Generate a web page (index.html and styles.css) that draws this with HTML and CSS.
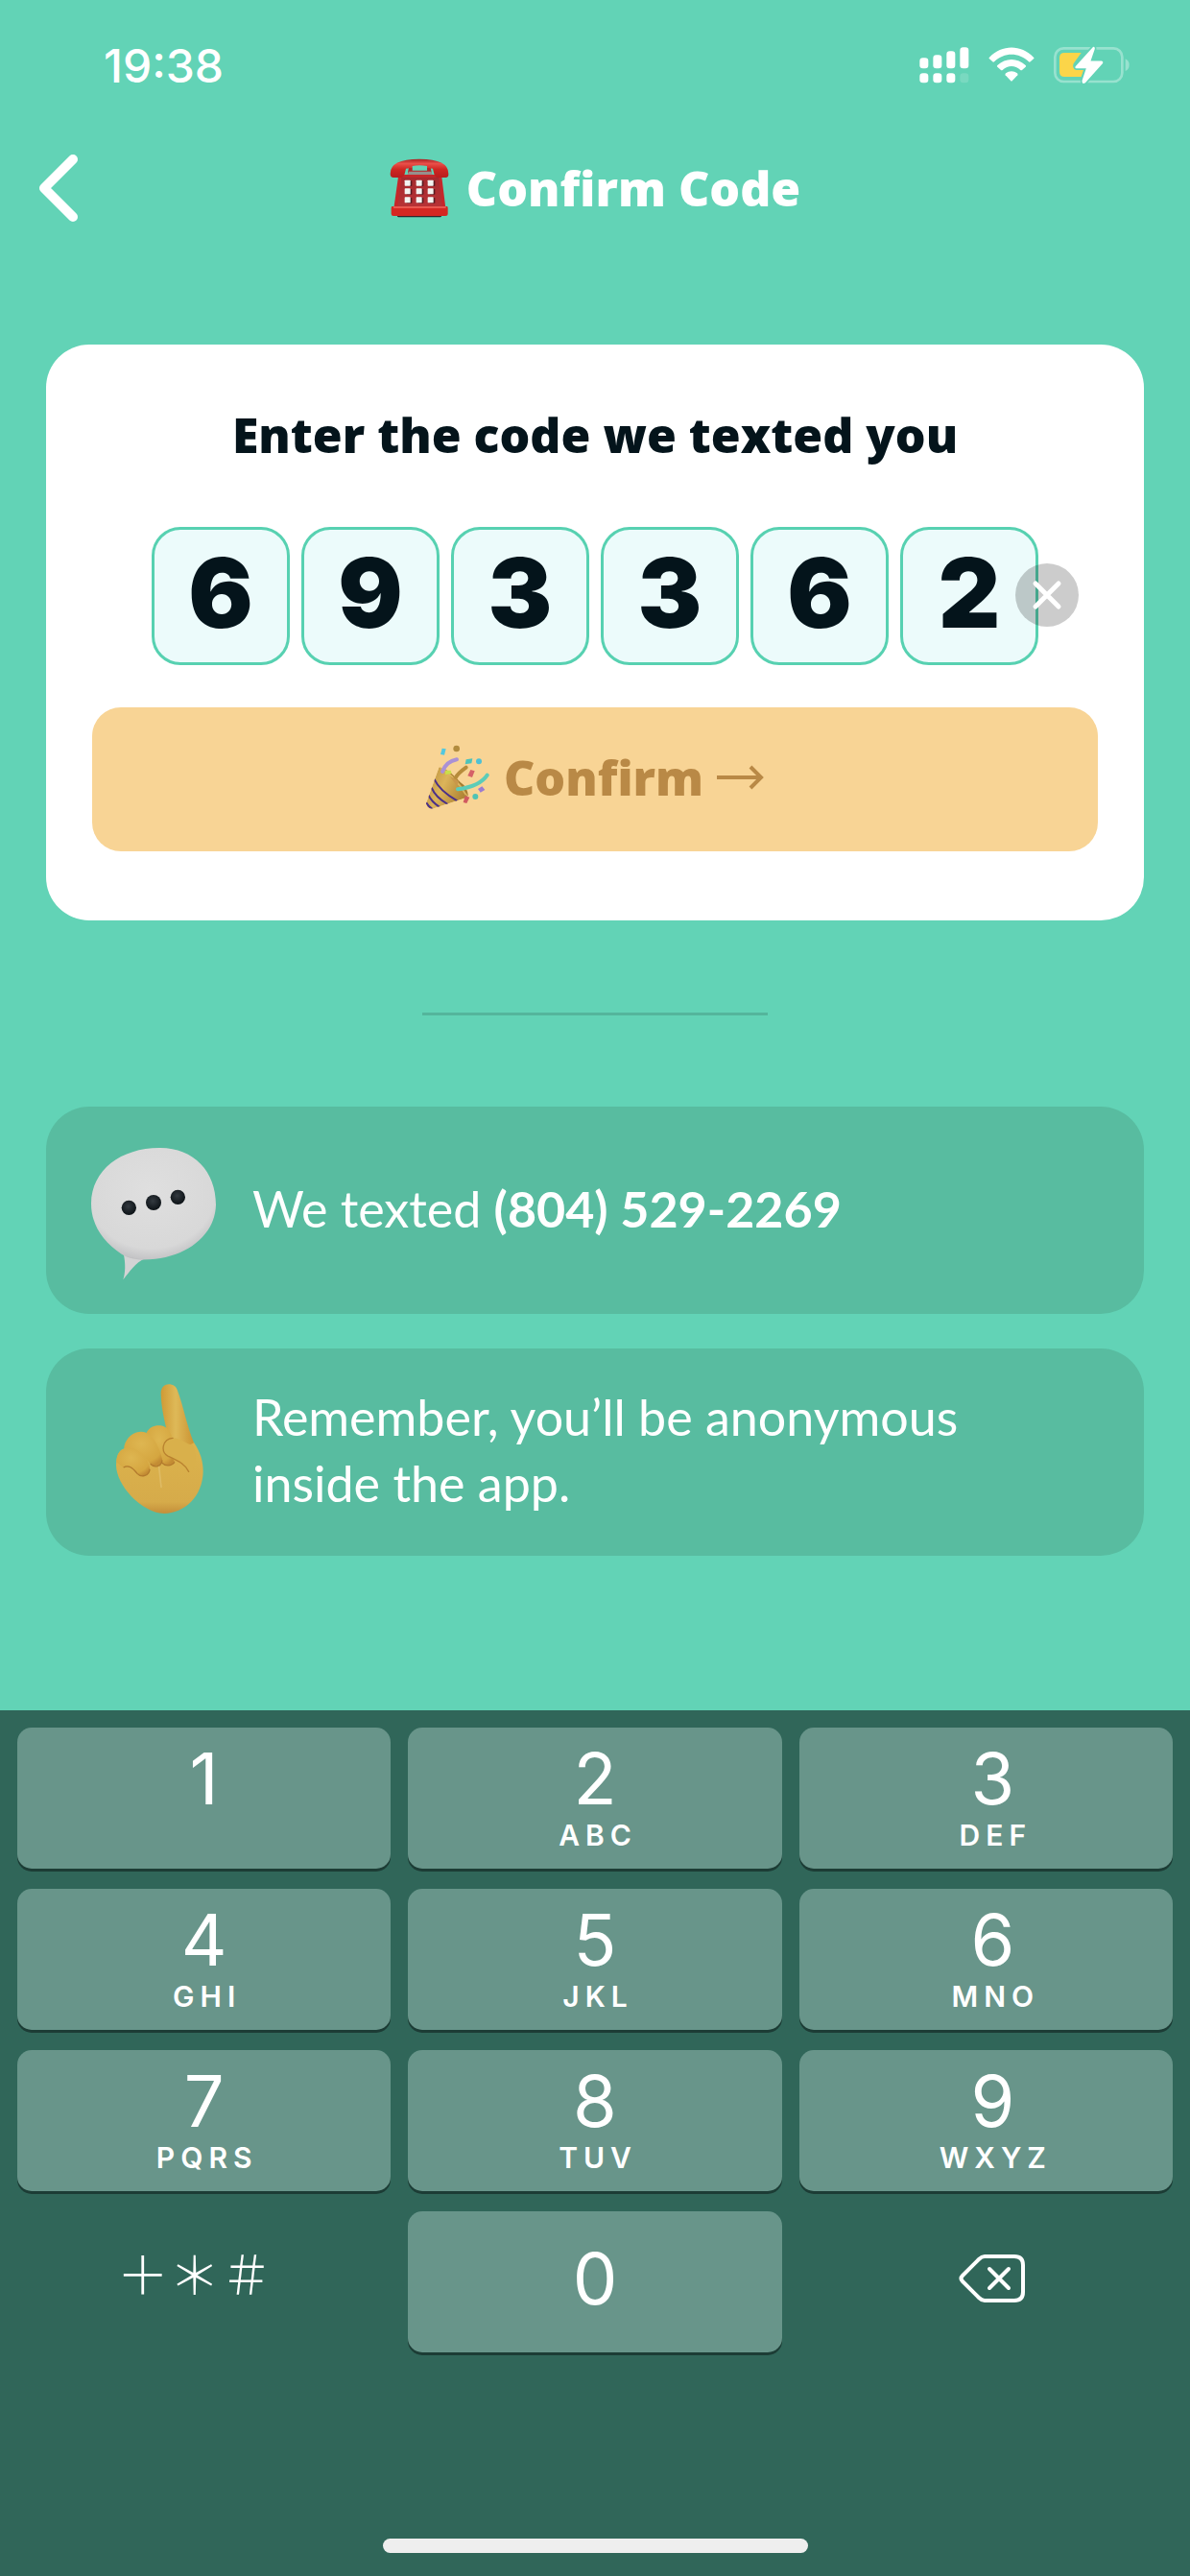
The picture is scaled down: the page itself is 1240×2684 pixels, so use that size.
FILE: index.html
```html
<!DOCTYPE html>
<html lang="en">
<head>
    <meta charset="UTF-8">
    <meta name="viewport" content="width=device-width, initial-scale=1.0">
    <title>Confirm Code</title>
    <link rel="stylesheet" href="styles.css">
</head>
<body>
    <div class="status-bar">
        <time class="clock">19:38</time>
        <div class="status-icons">
            <svg class="signal" viewBox="0 0 156 114" fill="#fff" aria-hidden="true">
                <rect x="1" y="34" width="27" height="33" rx="10"/>
                <rect x="43" y="25" width="27" height="42" rx="10"/>
                <rect x="85" y="13" width="27" height="54" rx="10"/>
                <rect x="127" y="1" width="27" height="66" rx="10"/>
                <rect x="1" y="82" width="27" height="30" rx="10"/>
                <rect x="43" y="82" width="27" height="30" rx="10"/>
                <rect x="85" y="82" width="27" height="30" rx="10"/>
                <rect x="127" y="82" width="27" height="30" rx="10" opacity="0.15"/>
            </svg>
            <svg class="wifi" viewBox="0 0 144 114" fill="#fff" aria-hidden="true">
                <path d="M3 32C42-9 102-9 141 32q3 3 0 5l-10 9q-3 2-5 0C95 16 49 16 18 46q-3 2-5 0L3 37q-3-2 0-5z"/>
                <path d="M28 57c25-24 63-24 88 0q3 3 0 5l-11 10q-3 2-5 0c-17-16-39-16-56 0q-3 2-5 0L28 62q-3-2 0-5z"/>
                <path d="M54 82c11-8 25-8 36 0q3 3 1 6L74 106q-2 2-4 0L53 88q-2-3 1-6z"/>
            </svg>
            <svg class="battery" viewBox="0 0 240 120" aria-hidden="true">
                <rect x="4" y="7" width="210" height="104" rx="27" fill="none" stroke="#fff" stroke-opacity="0.35" stroke-width="8"/>
                <path d="M224 40q12 6 12 19t-12 19z" fill="#fff" fill-opacity="0.35"/>
                <path d="M34 21H86L62 55q-6 12 9 20h22L86 96H34q-16 0-16-16V37q0-16 16-16z" fill="#fbd549"/>
                <path d="M121 1L66 62q-4 8 4 10h28L86 108q0 16 14 9L155 56q4-8-4-12H119L131 9q0-12-10-8z" fill="#fff" stroke="#62d3b6" stroke-width="5"/>
            </svg>
        </div>
    </div>

    <header class="nav">
        <button class="back" type="button" aria-label="Back">
            <svg viewBox="0 0 42 72" fill="none" stroke="#fff" stroke-width="10" stroke-linecap="round" stroke-linejoin="round" aria-hidden="true">
                <path d="M36 6L6 36L36 66"/>
            </svg>
        </button>
        <h1 class="title">
            <svg class="phone" viewBox="0 0 186 186" aria-hidden="true">
                <defs>
                    <linearGradient id="phoneTop" x1="0" y1="0" x2="0" y2="1">
                        <stop offset="0" stop-color="#a91f20"/>
                        <stop offset="0.25" stop-color="#e8504a"/>
                        <stop offset="0.55" stop-color="#cf2722"/>
                        <stop offset="1" stop-color="#b81d1d"/>
                    </linearGradient>
                    <linearGradient id="phoneBase" x1="0" y1="0" x2="0" y2="1">
                        <stop offset="0" stop-color="#a52a2e"/>
                        <stop offset="1" stop-color="#b73236"/>
                    </linearGradient>
                </defs>
                <path d="M24 172h138v9q0 3-4 3H28q-4 0-4-3z" fill="#32252b"/>
                <path d="M66 20h56q9 6 9 32H57q0-26 9-32z" fill="#b52427"/>
                <path d="M60 41h70l6 13H54z" fill="#96908c"/>
                <path d="M28 51h134l14 112H12z" fill="#c5272a"/>
                <path d="M37 59h117l10 92H25z" fill="url(#phoneBase)"/>
                <path d="M8 150h171q3 0 3 5v19q0 6-7 6H12q-7 0-7-7v-17q0-6 3-6z" fill="#d52722"/>
                <path d="M12 153h164" stroke="#ef6a61" stroke-width="4"/>
                <path d="M2 48Q1 2 93 2t91 46q1 12-9 12h-24q-9 0-12-11l-4-17q-42-9-84 0l-4 17q-3 11-13 11H12Q2 60 2 48z" fill="url(#phoneTop)"/>
                <path d="M71 24q22-4 46 0v14H71z" fill="#62d3b6"/>
                <g fill="#591b22">
                    <rect x="53" y="70" width="17" height="17" rx="2"/><rect x="89" y="70" width="17" height="17" rx="2"/><rect x="125" y="70" width="17" height="17" rx="2"/>
                    <rect x="53" y="96" width="17" height="17" rx="2"/><rect x="89" y="96" width="17" height="17" rx="2"/><rect x="125" y="96" width="17" height="17" rx="2"/>
                    <rect x="53" y="123" width="17" height="17" rx="2"/><rect x="89" y="123" width="17" height="17" rx="2"/><rect x="125" y="123" width="17" height="17" rx="2"/>
                </g>
                <g fill="#f3f3f1">
                    <rect x="47" y="68" width="18" height="18" rx="2"/><rect x="83" y="68" width="18" height="18" rx="2"/><rect x="119" y="68" width="18" height="18" rx="2"/>
                    <rect x="47" y="94" width="18" height="18" rx="2"/><rect x="83" y="94" width="18" height="18" rx="2"/><rect x="119" y="94" width="18" height="18" rx="2"/>
                    <rect x="47" y="121" width="18" height="18" rx="2"/><rect x="83" y="121" width="18" height="18" rx="2"/><rect x="119" y="121" width="18" height="18" rx="2"/>
                </g>
            </svg>
            Confirm Code
        </h1>
    </header>

    <main class="content">
        <form class="card">
            <h2 class="card-title">Enter the code we texted you</h2>
            <div class="code">
                <input class="digit" type="text" inputmode="numeric" maxlength="1" value="6" aria-label="Digit 1">
                <input class="digit" type="text" inputmode="numeric" maxlength="1" value="9" aria-label="Digit 2">
                <input class="digit" type="text" inputmode="numeric" maxlength="1" value="3" aria-label="Digit 3">
                <input class="digit" type="text" inputmode="numeric" maxlength="1" value="3" aria-label="Digit 4">
                <input class="digit" type="text" inputmode="numeric" maxlength="1" value="6" aria-label="Digit 5">
                <input class="digit" type="text" inputmode="numeric" maxlength="1" value="2" aria-label="Digit 6">
                <button class="clear" type="reset" aria-label="Clear code">
                    <svg viewBox="0 0 66 66" fill="none" stroke="#fff" stroke-width="5" stroke-linecap="round" aria-hidden="true">
                        <path d="M21 21L45 45M45 21L21 45"/>
                    </svg>
                </button>
            </div>
            <button class="confirm" type="submit">
                <svg class="popper" viewBox="0 0 204 204" aria-hidden="true">
                    <defs>
                        <linearGradient id="cone" x1="0" y1="0" x2="1" y2="0.5">
                            <stop offset="0" stop-color="#b58a3a"/>
                            <stop offset="0.5" stop-color="#dcb45a"/>
                            <stop offset="1" stop-color="#b08535"/>
                        </linearGradient>
                        <clipPath id="coneClip">
                            <path d="M43 71L3 184q4 20 24 15l105-35Q134 150 100 112 58 66 43 71z"/>
                        </clipPath>
                    </defs>
                    <path d="M43 71q40 20 92 90-3-30-25-44Q68 70 43 71z" fill="#a67c2f"/>
                    <g clip-path="url(#coneClip)">
                        <path d="M43 71L3 184q4 20 24 15l105-35Q134 150 100 112 58 66 43 71z" fill="url(#cone)"/>
                        <path d="M28 107q18 38 72 68M20 134q12 30 51 52M11 158q8 20 36 38M3 180q6 12 21 22" fill="none" stroke="#4b3089" stroke-width="6"/>
                    </g>
                    <path d="M49 73q44 26 79 84" fill="none" stroke="#dcb660" stroke-width="5"/>
                    <path d="M64 80l16 0 3 10-20 3z" fill="#c9e04a"/>
                    <path d="M94 105q7-15 34-34" fill="none" stroke="#b78c3b" stroke-width="12" stroke-linecap="round"/>
                    <path d="M77 98l28 15-5 16z" fill="#c9974a"/>
                    <path d="M54 84q12-32 45-38" fill="none" stroke="#aa91d5" stroke-width="12" stroke-linecap="round"/>
                    <path d="M102 139q69-9 92-44" fill="none" stroke="#5cccb8" stroke-width="12" stroke-linecap="round"/>
                    <path d="M53 11l12 2-5 19-12-2z" fill="#52c8df"/>
                    <circle cx="98" cy="12" r="10" fill="#b28c3e"/>
                    <path d="M128 46l20-3-3 15-20 3z" fill="#4dc3ba"/>
                    <circle cx="168" cy="52" r="9" fill="#4fc1d4"/>
                    <path d="M142 78l13 4-8 20-14-5z" fill="#d56167"/>
                    <path d="M165 138l13-8 9 11-14 8z" fill="#9c7cd0"/>
                    <circle cx="157" cy="162" r="9" fill="#4fc3b5"/>
                    <path d="M125 160l14 4-9 19-11-3z" fill="#d05a60"/>
                </svg>
                Confirm
                <svg class="arrow" viewBox="0 0 50 26" fill="none" stroke="#b98946" stroke-width="4" aria-hidden="true">
                    <path d="M0 13H46M35 2L46 13L35 24"/>
                </svg>
            </button>
        </form>

        <hr class="divider">

        <div class="info">
            <svg class="info-icon" viewBox="102 114 396 438" aria-hidden="true">
                <defs>
                    <radialGradient id="bubble" cx="0.48" cy="0.38" r="0.65">
                        <stop offset="0" stop-color="#dfdfdf"/>
                        <stop offset="0.8" stop-color="#d8d8d8"/>
                        <stop offset="0.95" stop-color="#c4c4c6"/>
                        <stop offset="1" stop-color="#a8a9aa"/>
                    </radialGradient>
                    <radialGradient id="dot" cx="0.45" cy="0.4" r="0.6">
                        <stop offset="0" stop-color="#333a40"/>
                        <stop offset="1" stop-color="#0c1216"/>
                    </radialGradient>
                </defs>
                <path d="M205 550C212 528 213 500 206 468L274 484C243 496 224 528 205 550z" fill="#d3d3d4"/>
                <path d="M105 312C106 206 200 137 321 138C426 138 495 212 495 316C493 406 411 474 306 485C270 489 232 490 200 470C139 430 105 375 105 312z" fill="url(#bubble)"/>
                <circle cx="223" cy="325" r="23" fill="url(#dot)"/>
                <circle cx="300" cy="309" r="24" fill="url(#dot)"/>
                <circle cx="376" cy="292" r="23" fill="url(#dot)"/>
            </svg>
            <p class="info-text">We texted <strong>(804) 529-2269</strong></p>
        </div>

        <div class="info">
            <svg class="info-icon" viewBox="102 870 396 438" aria-hidden="true">
                <defs>
                    <linearGradient id="palm" x1="0" y1="0" x2="0" y2="1">
                        <stop offset="0" stop-color="#dcb44d"/>
                        <stop offset="0.85" stop-color="#d6ab4a"/>
                        <stop offset="1" stop-color="#c48f3a"/>
                    </linearGradient>
                    <linearGradient id="finger" x1="0" y1="0" x2="1" y2="0">
                        <stop offset="0" stop-color="#cf9a35"/>
                        <stop offset="0.45" stop-color="#deb958"/>
                        <stop offset="1" stop-color="#cb9433"/>
                    </linearGradient>
                    <radialGradient id="knuckle" cx="0.45" cy="0.35" r="0.7">
                        <stop offset="0" stop-color="#deb651"/>
                        <stop offset="0.8" stop-color="#d5a640"/>
                        <stop offset="1" stop-color="#c38c34"/>
                    </radialGradient>
                </defs>
                <path d="M183 1130C184 1095 194 1080 214 1076L410 1040C440 1070 455 1110 455 1150C453 1230 395 1280 333 1281C260 1277 184 1192 183 1130z" fill="url(#palm)"/>
                <path d="M323 905C323 868 366 870 374 894C395 950 402 1000 426 1060L380 1085L344 1030C331 980 324 945 323 905z" fill="url(#finger)"/>
                <path d="M278 1028C292 998 337 1000 349 1022C360 1042 362 1046 330 1062L366 1118C358 1134 336 1134 325 1122z" fill="url(#knuckle)"/>
                <path d="M208 1072C216 1034 251 1018 277 1028C305 1042 321 1082 327 1112C327 1134 302 1138 290 1126C272 1104 245 1070 208 1078z" fill="url(#knuckle)"/>
                <path d="M184 1120C184 1086 206 1071 236 1078C264 1087 288 1116 288 1144C286 1164 262 1170 249 1156C236 1138 220 1128 206 1138z" fill="url(#knuckle)"/>
                <path d="M206 1137C222 1127 235 1139 249 1156C262 1170 287 1163 288 1142M290 1126C303 1139 325 1135 327 1114M326 1122C337 1134 355 1134 366 1120" fill="none" stroke="#b27a2d" stroke-width="4"/>
                <path d="M349 1046C324 1052 322 1092 350 1104C383 1120 396 1128 409 1154C432 1144 440 1100 422 1066C400 1066 383 1040 349 1046z" fill="#d9b04b"/>
                <path d="M360 1045C328 1048 320 1088 346 1102C380 1118 398 1126 410 1150" fill="none" stroke="#b9822f" stroke-width="4" stroke-linecap="round"/>
                <path d="M317 1136L324 1198" stroke="#e3c475" stroke-width="5" stroke-linecap="round" opacity="0.6"/>
            </svg>
            <p class="info-text">Remember, you’ll be anonymous inside the app.</p>
        </div>
    </main>

    <section class="keyboard" aria-label="Keypad">
        <div class="keys">
            <button class="key" type="button">1<span class="letters"></span></button>
            <button class="key" type="button">2<span class="letters">ABC</span></button>
            <button class="key" type="button">3<span class="letters">DEF</span></button>
            <button class="key" type="button">4<span class="letters">GHI</span></button>
            <button class="key" type="button">5<span class="letters">JKL</span></button>
            <button class="key" type="button">6<span class="letters">MNO</span></button>
            <button class="key" type="button">7<span class="letters">PQRS</span></button>
            <button class="key" type="button">8<span class="letters">TUV</span></button>
            <button class="key" type="button">9<span class="letters">WXYZ</span></button>
            <button class="key key-symbols" type="button">＋＊＃</button>
            <button class="key key-zero" type="button">0</button>
            <button class="key key-delete" type="button" aria-label="Delete">
                <svg class="delete" viewBox="0 0 70 52" fill="none" stroke="#fff" stroke-width="4" stroke-linecap="round" stroke-linejoin="round" aria-hidden="true">
                    <path d="M27 3H58Q67 3 67 12V40Q67 49 58 49H27Q24 49 21 46L4 29Q1 26 4 23L21 6Q24 3 27 3z"/>
                    <path d="M32 16L52 36M52 16L32 36"/>
                </svg>
            </button>
        </div>
        <div class="home-indicator"></div>
    </section>
</body>
</html>
```

FILE: styles.css
```css
* {
    box-sizing: border-box;
}
body {
    margin: 0;
    min-height: 100vh;
    display: flex;
    flex-direction: column;
    background-color: #62d3b6;
    color: white;
    font-family: Lato, sans-serif;
}
button {
    padding: 0;
    border: none;
    background: none;
    color: inherit;
    font-family: inherit;
    cursor: pointer;
}
svg {
    display: block;
    flex-shrink: 0;
}

/* status bar */
.status-bar {
    display: flex;
    justify-content: space-between;
    align-items: center;
    height: 136px;
    padding: 0 62px 0 108px;
}
.clock {
    font-family: Inter, sans-serif;
    font-size: 48px;
    font-weight: 500;
}
.status-icons {
    display: flex;
    align-items: center;
    gap: 20px;
}
.signal {
    width: 52px;
    height: 38px;
}
.wifi {
    width: 48px;
    height: 38px;
}
.battery {
    width: 80px;
    height: 40px;
}

/* navigation */
.nav {
    display: grid;
    grid-template-columns: 1fr auto 1fr;
    align-items: center;
    height: 120px;
    padding: 0 40px;
}
.back {
    justify-self: start;
}
.back svg {
    width: 42px;
    height: 72px;
}
.title {
    display: flex;
    align-items: center;
    gap: 18px;
    margin: 0;
    font-family: "Open Sans", sans-serif;
    font-size: 50px;
    font-weight: 800;
}
.phone {
    width: 62px;
    height: 62px;
}

/* code card */
.content {
    padding: 103px 48px 36px;
}
.card {
    padding: 62px 48px 72px;
    border-radius: 45px;
    background-color: white;
}
.card-title {
    margin: 0 0 64px;
    color: #04141b;
    font-family: "Open Sans", sans-serif;
    font-size: 50px;
    font-weight: 800;
    line-height: 64px;
    text-align: center;
}
.code {
    position: relative;
    display: flex;
    justify-content: center;
    gap: 12px;
    width: fit-content;
    margin: 0 auto 44px;
}
.digit {
    width: 144px;
    height: 144px;
    padding: 0 0 8px;
    border: 3px solid #57d1b1;
    border-radius: 30px;
    background-color: #ecfbfb;
    color: #04141b;
    font-family: Inter, sans-serif;
    font-size: 100px;
    font-weight: 900;
    text-align: center;
}
.clear {
    position: absolute;
    top: 38px;
    right: -42px;
    border-radius: 50%;
    background-color: rgba(0, 0, 0, 0.2);
}
.clear svg {
    width: 66px;
    height: 66px;
}
.confirm {
    display: flex;
    justify-content: center;
    align-items: center;
    gap: 14px;
    width: 100%;
    height: 150px;
    padding-bottom: 4px;
    border-radius: 30px;
    background-color: #f8d495;
    color: #b98946;
    font-family: "Open Sans", sans-serif;
    font-size: 50px;
    font-weight: 800;
}
.popper {
    width: 68px;
    height: 68px;
}
.arrow {
    width: 50px;
    height: 26px;
}

.divider {
    width: 360px;
    height: 3px;
    margin: 96px auto 95px;
    border: none;
    background-color: #54b59c;
}

/* info boxes */
.info {
    display: flex;
    align-items: center;
    gap: 37px;
    min-height: 216px;
    padding: 0 46px;
    border-radius: 45px;
    background-color: #58bca0;
}
.info + .info {
    margin-top: 36px;
}
.info-icon {
    width: 132px;
    height: 146px;
}
.info-text {
    max-width: 800px;
    margin: 0;
    padding-bottom: 4px;
    font-size: 52px;
    line-height: 69px;
}

/* keypad */
.keyboard {
    margin-top: auto;
    padding: 18px 18px 24px;
    background-color: #306659;
    font-family: Inter, sans-serif;
}
.keys {
    display: grid;
    grid-template-columns: repeat(3, 1fr);
    gap: 21px 18px;
}
.key {
    display: flex;
    flex-direction: column;
    align-items: center;
    height: 147px;
    padding-top: 14px;
    border-radius: 15px;
    background-color: #68958a;
    box-shadow: 0 3px 0 #1c3c35;
    font-size: 74px;
    font-weight: 400;
    line-height: 78px;
}
.key:nth-child(3n) {
    padding-left: 14px;
}
.letters {
    padding-left: 6px;
    font-size: 30px;
    font-weight: 600;
    line-height: 40px;
    letter-spacing: 6px;
}
.key-zero,
.key-symbols,
.key-delete {
    justify-content: center;
    padding-top: 0;
    padding-bottom: 8px;
}
.key-symbols,
.key-delete {
    background: none;
    box-shadow: none;
}
.key-symbols {
    padding-right: 20px;
    padding-bottom: 20px;
    font-family: "Noto Sans CJK JP", sans-serif;
    font-size: 54px;
    font-weight: 300;
}
.delete {
    width: 70px;
    height: 52px;
}
.home-indicator {
    width: 443px;
    height: 15px;
    margin: 194px auto 0;
    border-radius: 8px;
    background-color: #eee;
}
```
